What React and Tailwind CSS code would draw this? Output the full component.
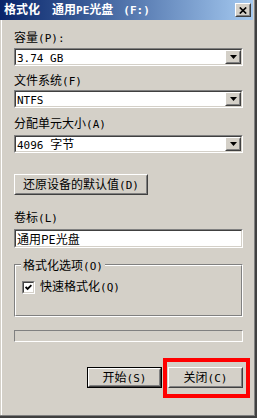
import React from "react";

function M({ children }) {
  return <span className="font-['DejaVu_Sans_Mono',monospace] text-[11px]">{children}</span>;
}

function Raised({ className = "", innerClassName = "", children }) {
  return (
    <div className={"border border-t-white border-l-white border-r-[#404040] border-b-[#404040] " + className}>
      <div className={"h-full w-full border border-t-[#d4d0c8] border-l-[#d4d0c8] border-r-[#808080] border-b-[#808080] bg-[#d4d0c8] flex items-center justify-center " + innerClassName}>
        {children}
      </div>
    </div>
  );
}

function Sunken({ className = "", innerClassName = "", children }) {
  return (
    <div className={"border border-t-[#808080] border-l-[#808080] border-r-white border-b-white " + className}>
      <div className={"h-full w-full border border-t-[#404040] border-l-[#404040] border-r-[#d4d0c8] border-b-[#d4d0c8] bg-white " + innerClassName}>
        {children}
      </div>
    </div>
  );
}

function Combo({ value, className = "" }) {
  return (
    <Sunken className={"h-[18px] w-[229px] " + className} innerClassName="flex items-stretch">
      <div className="flex-1 pl-[1px] leading-[14px] text-[12px] text-black whitespace-nowrap">{value}</div>
      <Raised className="w-[16px] h-full">
        <svg width="7" height="4" viewBox="0 0 7 4"><polygon points="0,0 7,0 3.5,4" fill="#000" /></svg>
      </Raised>
    </Sunken>
  );
}

function Label({ children, className = "" }) {
  return <div className={"h-[14px] leading-[14px] text-[12px] text-black whitespace-nowrap " + className}>{children}</div>;
}

const txt = "text-[12px] leading-[14px] text-black whitespace-nowrap";

export default function App() {
  return (
    <div className="relative w-[257px] h-[418px] border-r-2 border-b-2 border-[#404040] bg-[#d4d0c8] overflow-hidden font-['Noto_Sans_CJK_SC','Noto_Sans',sans-serif]">
      <div className="h-full w-full border-r border-b border-[#808080] flex flex-col">
        {/* Title bar */}
        <div className="h-[20px] mr-[1px] flex items-center bg-gradient-to-r from-[#0a246a] to-[#a6caf0] pl-[4px] pr-[2px]">
          <div className="flex-1 text-white font-bold text-[12px] leading-[14px] whitespace-nowrap">
            格式化<span className="ml-[12px]">通用<M>PE</M>光盘</span><span className="ml-[10px]"><M>(F:)</M></span>
          </div>
          <Raised className="w-[16px] h-[14px]">
            <svg width="8" height="7" viewBox="0 0 8 7">
              <path d="M0.8 0.5 L7.2 6.5 M7.2 0.5 L0.8 6.5" stroke="#000" strokeWidth="1.7" />
            </svg>
          </Raised>
        </div>

        {/* Body */}
        <div className="flex-1 ml-[1px] border-l border-white pl-[12px] flex flex-col">
          <Label className="mt-[10px]">容量<M>(P):</M></Label>
          <Combo value={<M>3.74 GB</M>} className="mt-[4px]" />
          <Label className="mt-[7px]">文件系统<M>(F)</M></Label>
          <Combo value={<M>NTFS</M>} className="mt-[3px]" />
          <Label className="mt-[8px]">分配单元大小<M>(A)</M></Label>
          <Combo value={<><M>4096 </M>字节</>} className="mt-[5px]" />

          <Raised className="mt-[21px] w-[134px] h-[21px]">
            <span className={txt}>还原设备的默认值<M>(D)</M></span>
          </Raised>

          <Label className="mt-[15px]">卷标<M>(L)</M></Label>
          <Sunken className="mt-[5px] h-[19px] w-[229px]" innerClassName="flex items-center">
            <span className={"pl-[1px] " + txt}>通用PE光盘</span>
          </Sunken>

          {/* Group box */}
          <div className="relative mt-[10px] w-[229px] pt-[6px]">
            <div className="h-[53px] border border-t-[#808080] border-l-[#808080] border-r-white border-b-white">
              <div className="h-full border border-t-white border-l-white border-r-[#808080] border-b-[#808080] pl-[6px] pt-[13px]">
                <div className="flex items-center gap-[5px]">
                  <Sunken className="w-[13px] h-[13px]" innerClassName="flex items-center justify-center">
                    <svg width="7" height="7" viewBox="0 0 7 7">
                      <polyline points="0.6,3 2.6,5 6.4,1.2" fill="none" stroke="#000" strokeWidth="1.8" />
                    </svg>
                  </Sunken>
                  <span className={txt}>快速格式化<M>(Q)</M></span>
                </div>
              </div>
            </div>
            <div className="absolute left-[7px] top-0 px-[2px] bg-[#d4d0c8] text-[12px] leading-[13px] text-black whitespace-nowrap">
              格式化选项<M>(O)</M>
            </div>
          </div>

          {/* Progress bar */}
          <div className="mt-[13px] w-[229px] h-[12px] border border-t-[#808080] border-l-[#808080] border-r-white border-b-white" />

          {/* Buttons */}
          <div className="mt-[25px] w-[229px] flex justify-end gap-[6px]">
            <div className="border border-black">
              <Raised className="w-[73px] h-[19px]">
                <span className={txt}>开始<M>(S)</M></span>
              </Raised>
            </div>
            <Raised className="w-[75px] h-[21px]">
              <span className={txt}>关闭<M>(C)</M></span>
            </Raised>
          </div>
        </div>
      </div>

      {/* Red highlight */}
      <div className="absolute left-[163px] top-[358px] w-[87px] h-[40px] border-4 border-[#ff0000]" />
    </div>
  );
}
